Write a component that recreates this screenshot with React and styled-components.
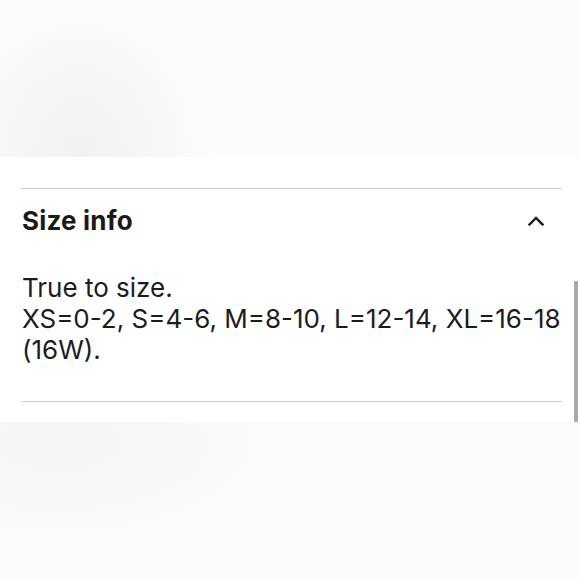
import React from "react";
import styled, { createGlobalStyle } from "styled-components";

const Global = createGlobalStyle`
  html, body { margin: 0; padding: 0; background: #ffffff; }
  body { font-family: "Inter", "Liberation Sans", sans-serif; color: #1b1b1b; }
`;

const Page = styled.div`
  width: 580px;
  height: 580px;
  display: flex;
  flex-direction: column;
  overflow: hidden;
`;

const TopBand = styled.div`
  height: 157px;
  flex: none;
  background:
    radial-gradient(ellipse 130px 150px at 80px 150px, #f1f1f1 0%, #f6f6f6 50%, rgba(252,252,252,0) 100%),
    #fcfcfc;
`;

const Panel = styled.div`
  position: relative;
  height: 265px;
  flex: none;
  background: #ffffff;
  padding: 31px 18px 0 21px;
  box-sizing: border-box;
`;

const Section = styled.section`
  border-top: 1.5px solid #d0d0d0;
  border-bottom: 1.5px solid #d0d0d0;
  height: 214px;
  box-sizing: border-box;
  display: flex;
  flex-direction: column;
`;

const Header = styled.div`
  height: 63px;
  display: flex;
  align-items: center;
  justify-content: space-between;
  padding-right: 18px;
`;

const Title = styled.h2`
  margin: 0;
  font-family: "Inter", "Liberation Sans", sans-serif;
  font-weight: 700;
  font-size: 26px;
  letter-spacing: 0.2px;
  color: #1a1a1a;
  padding-left: 1px;
`;

const Body = styled.p`
  margin: 0;
  padding-top: 20px;
  padding-left: 1px;
  font-family: "Inter", "Liberation Sans", sans-serif;
  font-size: 26px;
  line-height: 31px;
  letter-spacing: 0;
  color: #1c1c1c;
`;

const Scrollbar = styled.div`
  position: absolute;
  right: 2px;
  top: 124px;
  width: 4px;
  height: 141px;
  background: #a9a9a9;
  border-radius: 1px;
`;

const BottomBand = styled.div`
  flex: 1;
  background:
    radial-gradient(ellipse 260px 120px at 60px 20px, #f5f5f5 0%, rgba(250,250,250,0) 100%),
    #fcfcfc;
`;

const Chevron = () => (
  <svg width="16" height="11" viewBox="0 0 16 11" fill="none">
    <path d="M1.5 9.5 L8 3 L14.5 9.5" stroke="#1a1a1a" strokeWidth="2.4" strokeLinecap="square" />
  </svg>
);

export default function App() {
  return (
    <Page>
      <Global />
      <TopBand />
      <Panel>
        <Section>
          <Header>
            <Title>Size info</Title>
            <Chevron />
          </Header>
          <Body>
            True to size.
            <br />
            XS=0-2, S=4-6, M=8-10, L=12-14, XL=16-18 (16W).
          </Body>
        </Section>
        <Scrollbar />
      </Panel>
      <BottomBand />
    </Page>
  );
}
